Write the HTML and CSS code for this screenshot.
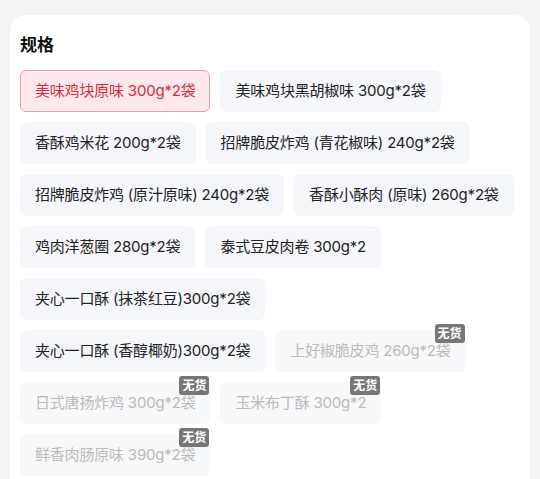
FILE: index.html
```html
<!DOCTYPE html>
<html lang="zh-CN">
<head>
<meta charset="UTF-8">
<meta name="viewport" content="width=device-width, initial-scale=1.0">
<title>规格</title>
<link rel="stylesheet" href="styles.css">
</head>
<body>
    <div class="card">
        <p class="title">规格</p>
        <div class="specs">
            <div class="spec selected">美味鸡块原味 300g*2袋</div>
            <div class="spec">美味鸡块黑胡椒味 300g*2袋</div>
            <div class="spec">香酥鸡米花 200g*2袋</div>
            <div class="spec">招牌脆皮炸鸡 (青花椒味) 240g*2袋</div>
            <div class="spec">招牌脆皮炸鸡 (原汁原味) 240g*2袋</div>
            <div class="spec">香酥小酥肉 (原味) 260g*2袋</div>
            <div class="spec">鸡肉洋葱圈 280g*2袋</div>
            <div class="spec">泰式豆皮肉卷 300g*2</div>
            <div class="spec">夹心一口酥 (抹茶红豆)300g*2袋</div>
            <div class="spec">夹心一口酥 (香醇椰奶)300g*2袋</div>
            <div class="spec off">上好椒脆皮鸡 260g*2袋<span class="badge">无货</span></div>
            <div class="spec off">日式唐扬炸鸡 300g*2袋<span class="badge">无货</span></div>
            <div class="spec off">玉米布丁酥 300g*2<span class="badge">无货</span></div>
            <div class="spec off">鲜香肉肠原味 390g*2袋<span class="badge">无货</span></div>
        </div>
    </div>
</body>
</html>
```

FILE: styles.css
```css
body{
  margin: 0;
  background-color: #f4f4f6;
  font-family: "Inter", "Noto Sans CJK SC", sans-serif;
}

.card{
  margin: 15px 0 0 10px;
  width: 520px;
  height: 500px;
  box-sizing: border-box;
  padding: 18px 10px 0 10px;
  background-color: white;
  border-radius: 16px 16px 0 0;
}

.title{
  margin: 0 0 13px 0;
  font-size: 17px;
  font-weight: bold;
  line-height: 24px;
  color: #111;
}

.specs{
  display: flex;
  flex-wrap: wrap;
  gap: 10px;
}

.spec{
  position: relative;
  height: 42px;
  line-height: 40px;
  box-sizing: border-box;
  padding: 0 14px;
  border: 1px solid transparent;
  border-radius: 6px;
  background-color: #f5f6fa;
  color: #222;
  font-size: 15px;
  letter-spacing: -0.2px;
  white-space: nowrap;
}

.selected{
  background-color: #fde9ed;
  border-color: #e3a2ab;
  color: #d52b3c;
}

.off{
  background-color: #f7f8fa;
  color: #bbbbbb;
}

.badge{
  position: absolute;
  top: -7px;
  right: 0;
  height: 19px;
  line-height: 19px;
  padding: 0 3px;
  border-radius: 3px;
  background-color: #777;
  color: white;
  font-size: 12px;
  font-weight: bold;
  letter-spacing: 0;
}
```
